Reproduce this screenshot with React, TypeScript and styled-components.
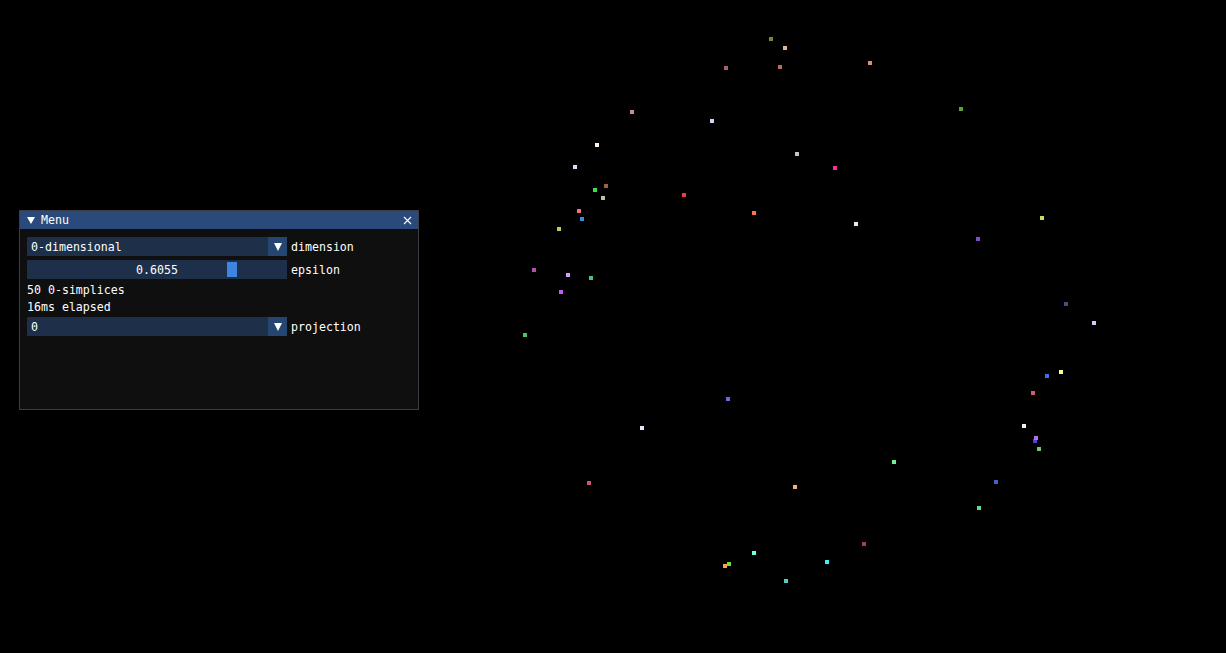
import * as React from 'react'
import styled, {createGlobalStyle} from 'styled-components'

const GlobalStyle = createGlobalStyle`
  html, body {
    margin: 0;
    padding: 0;
    background: #000;
    overflow: hidden;
  }
`

interface Point {
  x: number
  y: number
  c: string
}

// the 50 projected 0-simplices, top-left corner of each 4px square
const points: Point[] = [
  {x: 769, y: 37, c: '#6e8a3c'},
  {x: 783, y: 46, c: '#d8b8a0'},
  {x: 868, y: 61, c: '#d89070'},
  {x: 724, y: 66, c: '#a86070'},
  {x: 778, y: 65, c: '#c06868'},
  {x: 630, y: 110, c: '#b890a0'},
  {x: 710, y: 119, c: '#d0d0f8'},
  {x: 595, y: 143, c: '#fff0e8'},
  {x: 795, y: 152, c: '#c0c8c0'},
  {x: 833, y: 166, c: '#ff3090'},
  {x: 573, y: 165, c: '#d0e0f8'},
  {x: 604, y: 184, c: '#a06048'},
  {x: 593, y: 188, c: '#40e040'},
  {x: 601, y: 196, c: '#c0c0a0'},
  {x: 682, y: 193, c: '#e84040'},
  {x: 577, y: 209, c: '#f07080'},
  {x: 580, y: 217, c: '#4088e0'},
  {x: 752, y: 211, c: '#ff7050'},
  {x: 854, y: 222, c: '#e8e8e8'},
  {x: 959, y: 107, c: '#60a040'},
  {x: 1040, y: 216, c: '#c0e060'},
  {x: 976, y: 237, c: '#8050c0'},
  {x: 557, y: 227, c: '#b0d060'},
  {x: 532, y: 268, c: '#b050b0'},
  {x: 566, y: 273, c: '#d0a0ff'},
  {x: 589, y: 276, c: '#50c080'},
  {x: 559, y: 290, c: '#c060f0'},
  {x: 523, y: 333, c: '#50c070'},
  {x: 1064, y: 302, c: '#405080'},
  {x: 1092, y: 321, c: '#d0c8ff'},
  {x: 1059, y: 370, c: '#ffff90'},
  {x: 1045, y: 374, c: '#4070f0'},
  {x: 1031, y: 391, c: '#d06070'},
  {x: 1022, y: 424, c: '#e8f8e0'},
  {x: 1033, y: 439, c: '#5040e0'},
  {x: 1034, y: 436, c: '#b070f0'},
  {x: 1037, y: 447, c: '#80c080'},
  {x: 726, y: 397, c: '#8060e0'},
  {x: 640, y: 426, c: '#e0e8f8'},
  {x: 892, y: 460, c: '#70f090'},
  {x: 587, y: 481, c: '#d05080'},
  {x: 793, y: 485, c: '#f0b080'},
  {x: 994, y: 480, c: '#4060d0'},
  {x: 977, y: 506, c: '#60e080'},
  {x: 862, y: 542, c: '#b03080'},
  {x: 752, y: 551, c: '#70ffe0'},
  {x: 825, y: 560, c: '#40f0f0'},
  {x: 723, y: 564, c: '#ffa050'},
  {x: 727, y: 562, c: '#70e040'},
  {x: 784, y: 579, c: '#50d0c0'},
]

const Scene = styled.div`
  position: relative;
  width: 1226px;
  height: 653px;
  background: #000;
  overflow: hidden;
  font-family: "DejaVu Sans Mono", "Liberation Mono", monospace;
  font-size: 11.6px;
  color: #fff;
`

const Dot = styled.div`
  position: absolute;
  width: 4px;
  height: 4px;
`

const Window = styled.div`
  position: absolute;
  left: 19px;
  top: 210px;
  width: 400px;
  height: 200px;
  box-sizing: border-box;
  border: 1px solid #3c3c44;
  background: #0f0f0f;
  display: flex;
  flex-direction: column;
`

const TitleBar = styled.div`
  height: 18px;
  box-sizing: border-box;
  padding: 1px 6px 0 7px;
  background: #294a7a;
  display: flex;
  align-items: center;
  gap: 6px;
  line-height: 13px;
`

const TitleText = styled.span`
  flex: 1;
`

const Body = styled.div`
  padding: 8px 7px;
  display: flex;
  flex-direction: column;
  gap: 4px;
`

const Row = styled.div`
  display: flex;
  align-items: center;
  gap: 4px;
  height: 19px;
`

const Label = styled.span`
  padding-top: 1px;
`

const Frame = styled.div`
  position: relative;
  width: 260px;
  height: 19px;
  background: #1d2f49;
  display: flex;
  align-items: center;
  line-height: 13px;
`

const ComboValue = styled.span`
  flex: 1;
  padding: 1px 0 0 4px;
`

const ArrowButton = styled.div`
  width: 19px;
  height: 19px;
  background: #25476f;
  display: flex;
  align-items: center;
  justify-content: center;
`

const SliderValue = styled.span`
  flex: 1;
  padding-top: 1px;
  text-align: center;
`

const Grab = styled.div<{$pos: number}>`
  position: absolute;
  top: 2px;
  left: ${(p): number => p.$pos}px;
  width: 10px;
  height: 15px;
  background: #3d85e0;
`

const TextLine = styled.div`
  height: 13px;
  box-sizing: border-box;
  padding-top: 1px;
  line-height: 13px;
`

const DownArrow = ({w = 8, h = 7}: {w?: number; h?: number}): JSX.Element => (
  <svg width={w} height={h} viewBox={`0 0 ${w} ${h}`}>
    <polygon points={`0,0 ${w},0 ${w / 2},${h}`} fill='#fff' />
  </svg>
)

const CloseIcon = (): JSX.Element => (
  <svg width='9' height='9' viewBox='0 0 9 9'>
    <path d='M1 1 L8 8 M8 1 L1 8' stroke='#fff' strokeWidth='1.1' fill='none' />
  </svg>
)

const Combo = ({value}: {value: string}): JSX.Element => (
  <Frame>
    <ComboValue>{value}</ComboValue>
    <ArrowButton>
      <DownArrow w={8} h={8} />
    </ArrowButton>
  </Frame>
)

export default function App(): JSX.Element {
  const epsilon = 0.6055
  return (
    <Scene>
      <GlobalStyle />
      {points.map((p, i) => (
        <Dot key={i} style={{left: p.x, top: p.y, background: p.c}} />
      ))}
      <Window>
        <TitleBar>
          <DownArrow />
          <TitleText>Menu</TitleText>
          <CloseIcon />
        </TitleBar>
        <Body>
          <Row>
            <Combo value='0-dimensional' />
            <Label>dimension</Label>
          </Row>
          <Row>
            <Frame>
              <SliderValue>{epsilon.toFixed(4)}</SliderValue>
              <Grab $pos={200} />
            </Frame>
            <Label>epsilon</Label>
          </Row>
          <TextLine>50 0-simplices</TextLine>
          <TextLine>16ms elapsed</TextLine>
          <Row>
            <Combo value='0' />
            <Label>projection</Label>
          </Row>
        </Body>
      </Window>
    </Scene>
  )
}
